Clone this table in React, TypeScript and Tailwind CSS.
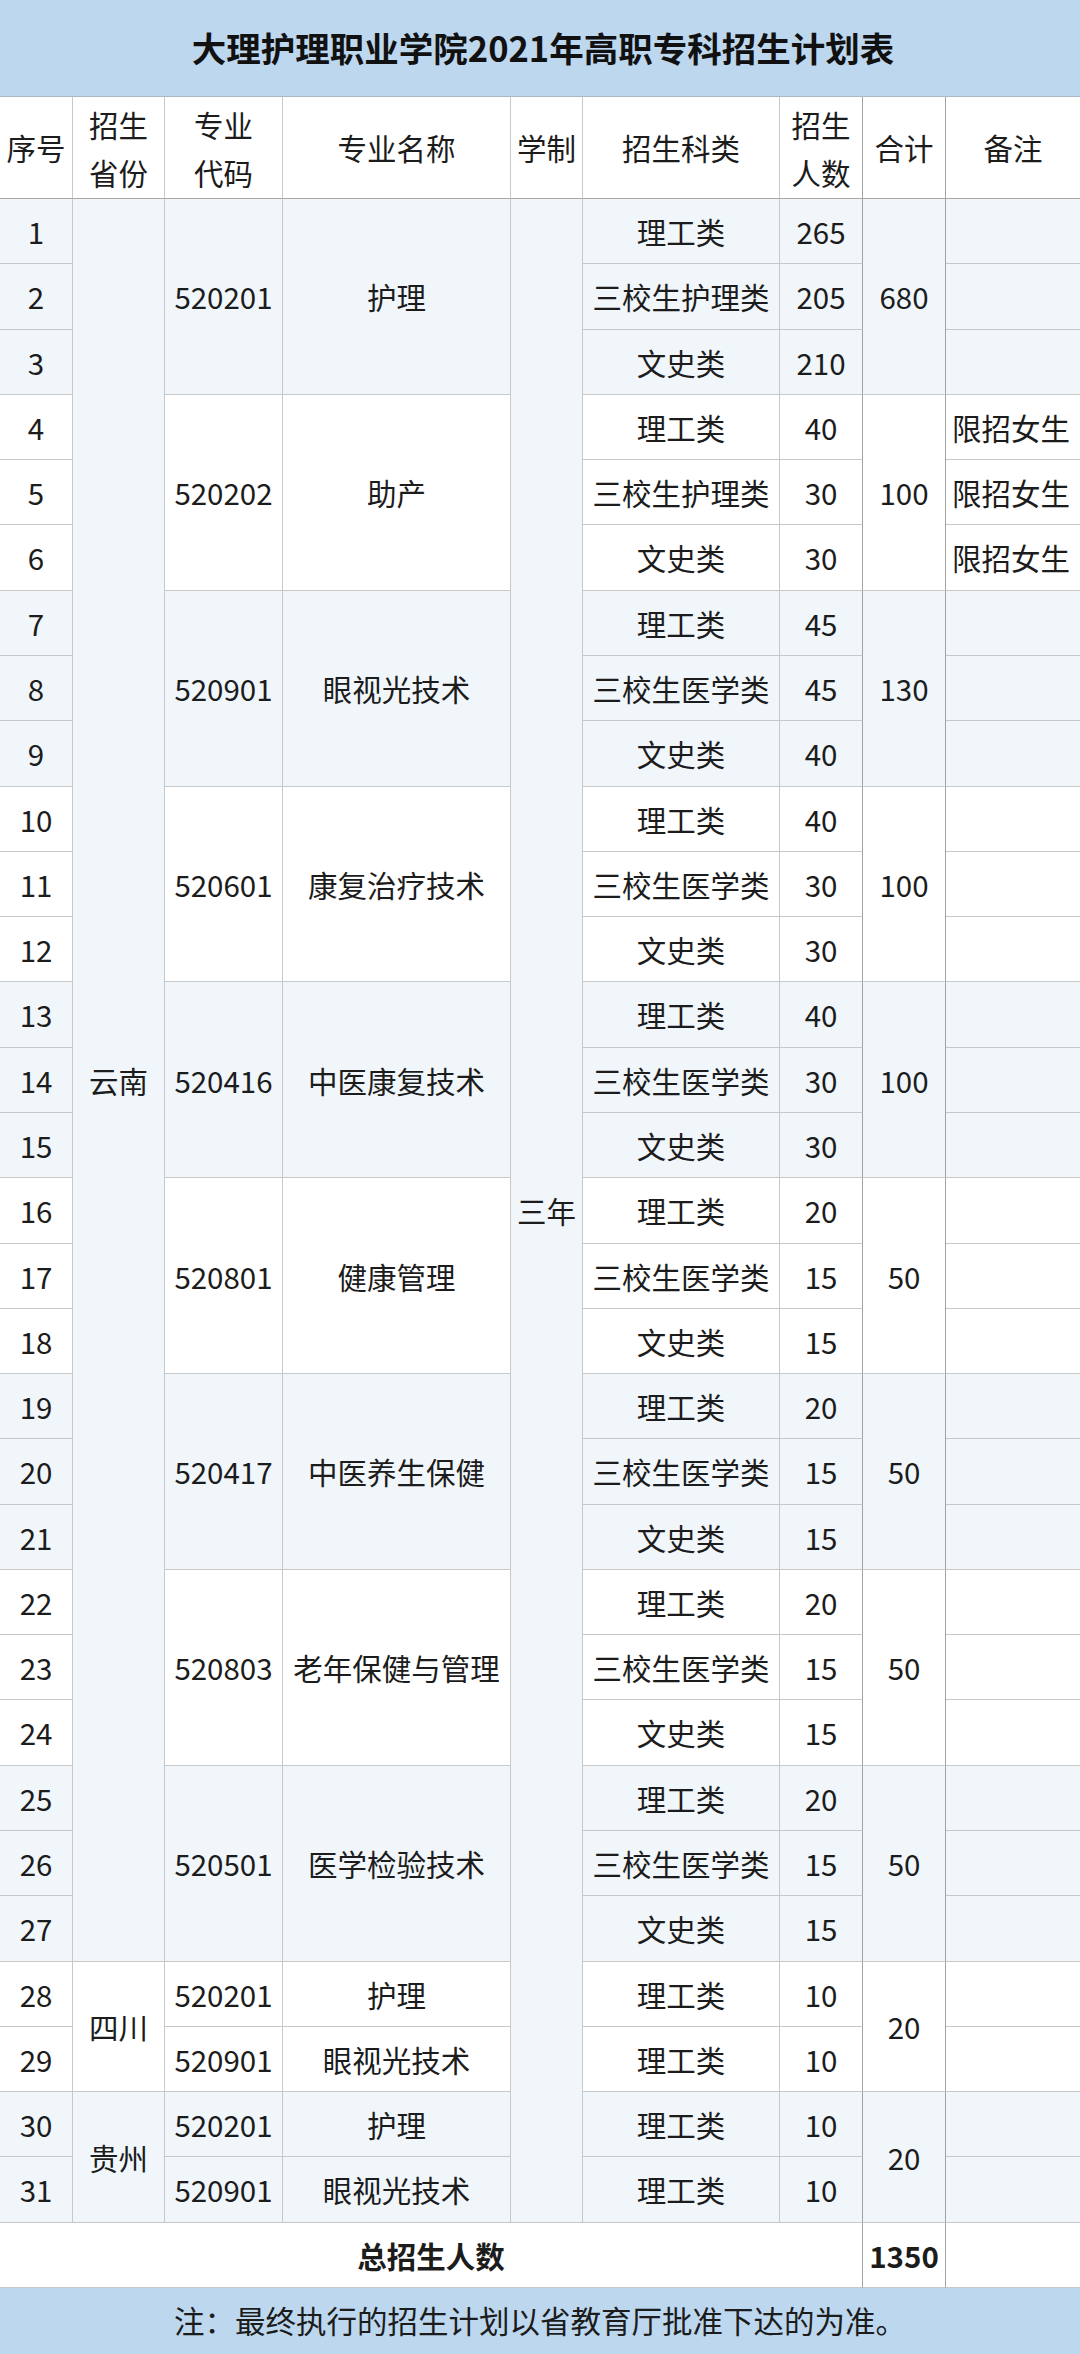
import React from 'react';

type Group = {
  code: string;
  name: string;
  total: number;
  rows: [string, number][];
  note?: string;
};

const yunnan: Group[] = [
  { code: '520201', name: '护理', total: 680, rows: [['理工类', 265], ['三校生护理类', 205], ['文史类', 210]] },
  { code: '520202', name: '助产', total: 100, rows: [['理工类', 40], ['三校生护理类', 30], ['文史类', 30]], note: '限招女生' },
  { code: '520901', name: '眼视光技术', total: 130, rows: [['理工类', 45], ['三校生医学类', 45], ['文史类', 40]] },
  { code: '520601', name: '康复治疗技术', total: 100, rows: [['理工类', 40], ['三校生医学类', 30], ['文史类', 30]] },
  { code: '520416', name: '中医康复技术', total: 100, rows: [['理工类', 40], ['三校生医学类', 30], ['文史类', 30]] },
  { code: '520801', name: '健康管理', total: 50, rows: [['理工类', 20], ['三校生医学类', 15], ['文史类', 15]] },
  { code: '520417', name: '中医养生保健', total: 50, rows: [['理工类', 20], ['三校生医学类', 15], ['文史类', 15]] },
  { code: '520803', name: '老年保健与管理', total: 50, rows: [['理工类', 20], ['三校生医学类', 15], ['文史类', 15]] },
  { code: '520501', name: '医学检验技术', total: 50, rows: [['理工类', 20], ['三校生医学类', 15], ['文史类', 15]] },
];

const others = [
  { province: '四川', light: false, items: [['520201', '护理'], ['520901', '眼视光技术']] },
  { province: '贵州', light: true, items: [['520201', '护理'], ['520901', '眼视光技术']] },
];

const base = 'flex items-center justify-center text-center border-b border-[#c8c8c8]';
const line = 'border-r border-[#c4c4c4]';
const dark = 'border-r border-r-[#a2a2a2]';

function Cell({ className = '', children }: { className?: string; children?: React.ReactNode }) {
  return <div className={`${base} ${className}`}>{children}</div>;
}

export default function App() {
  const cells: React.ReactNode[] = [];
  let seq = 0;

  yunnan.forEach((g, gi) => {
    const bg = gi % 2 === 0 ? 'bg-[#f1f6fb]' : 'bg-white';
    g.rows.forEach(([kind, num], r) => {
      seq += 1;
      const k = `y${seq}`;
      cells.push(<Cell key={k + 'a'} className={`${bg} ${line}`}>{seq}</Cell>);
      if (seq === 1) {
        cells.push(<Cell key="yn" className={`row-span-27 bg-[#f1f6fb] ${line}`}>云南</Cell>);
      }
      if (r === 0) {
        cells.push(<Cell key={k + 'c'} className={`row-span-3 ${bg} ${line}`}>{g.code}</Cell>);
        cells.push(<Cell key={k + 'n'} className={`row-span-3 ${bg} ${line}`}>{g.name}</Cell>);
      }
      if (seq === 1) {
        cells.push(<Cell key="xz" className={`row-span-31 bg-[#f1f6fb] ${line}`}>三年</Cell>);
      }
      cells.push(<Cell key={k + 'k'} className={`${bg} ${line}`}>{kind}</Cell>);
      cells.push(<Cell key={k + 'p'} className={`${bg} ${dark}`}>{num}</Cell>);
      if (r === 0) {
        cells.push(<Cell key={k + 't'} className={`row-span-3 ${bg} ${dark}`}>{g.total}</Cell>);
      }
      cells.push(<Cell key={k + 'm'} className={`${bg} justify-start pl-[6px]`}>{g.note ?? ''}</Cell>);
    });
  });

  others.forEach((o) => {
    const bg = o.light ? 'bg-[#f1f6fb]' : 'bg-white';
    o.items.forEach(([code, name], i) => {
      seq += 1;
      const k = `o${seq}`;
      cells.push(<Cell key={k + 'a'} className={`${bg} ${line}`}>{seq}</Cell>);
      if (i === 0) {
        cells.push(<Cell key={k + 's'} className={`row-span-2 ${bg} ${line}`}>{o.province}</Cell>);
      }
      cells.push(<Cell key={k + 'c'} className={`${bg} ${line}`}>{code}</Cell>);
      cells.push(<Cell key={k + 'n'} className={`${bg} ${line}`}>{name}</Cell>);
      cells.push(<Cell key={k + 'k'} className={`${bg} ${line}`}>理工类</Cell>);
      cells.push(<Cell key={k + 'p'} className={`${bg} ${dark}`}>10</Cell>);
      if (i === 0) {
        cells.push(<Cell key={k + 't'} className={`row-span-2 ${bg} ${dark}`}>20</Cell>);
      }
      cells.push(<Cell key={k + 'm'} className={bg}></Cell>);
    });
  });

  return (
    <div className="w-[1080px] bg-white font-['Noto_Sans_CJK_SC','Noto_Sans',sans-serif] text-[29.5px] text-[#1c1c1c]">
      <div className="grid grid-cols-[73px_92px_118px_228px_72px_197px_83px_83px_134px] grid-rows-[97px_102px_repeat(31,65.29px)_65.5px_65.5px]">
        <div className="col-span-9 flex items-center justify-center border-b border-[#a9b8c6] bg-[#bdd7ee] pl-[6px] text-[34.5px] font-bold text-[#111]">
          大理护理职业学院2021年高职专科招生计划表
        </div>

        {/* header */}
        <Cell className={`${line} border-b-[#a8a8a8]`}>序号</Cell>
        <Cell className={`${line} border-b-[#a8a8a8] leading-[48px]`}>招生<br />省份</Cell>
        <Cell className={`${line} border-b-[#a8a8a8] leading-[48px]`}>专业<br />代码</Cell>
        <Cell className={`${line} border-b-[#a8a8a8]`}>专业名称</Cell>
        <Cell className={`${line} border-b-[#a8a8a8]`}>学制</Cell>
        <Cell className={`${line} border-b-[#a8a8a8]`}>招生科类</Cell>
        <Cell className={`${dark} border-b-[#a8a8a8] leading-[48px]`}>招生<br />人数</Cell>
        <Cell className={`${dark} border-b-[#a8a8a8]`}>合计</Cell>
        <Cell className="border-b-[#a8a8a8]">备注</Cell>

        {cells}

        {/* total */}
        <Cell className={`col-span-7 bg-white font-bold ${dark}`}>总招生人数</Cell>
        <Cell className={`bg-white font-bold ${dark}`}>1350</Cell>
        <Cell className="bg-white"></Cell>

        <div className="col-span-9 flex items-center justify-center bg-[#bdd7ee] text-[30.5px]">
          注：最终执行的招生计划以省教育厅批准下达的为准。
        </div>
      </div>
    </div>
  );
}
